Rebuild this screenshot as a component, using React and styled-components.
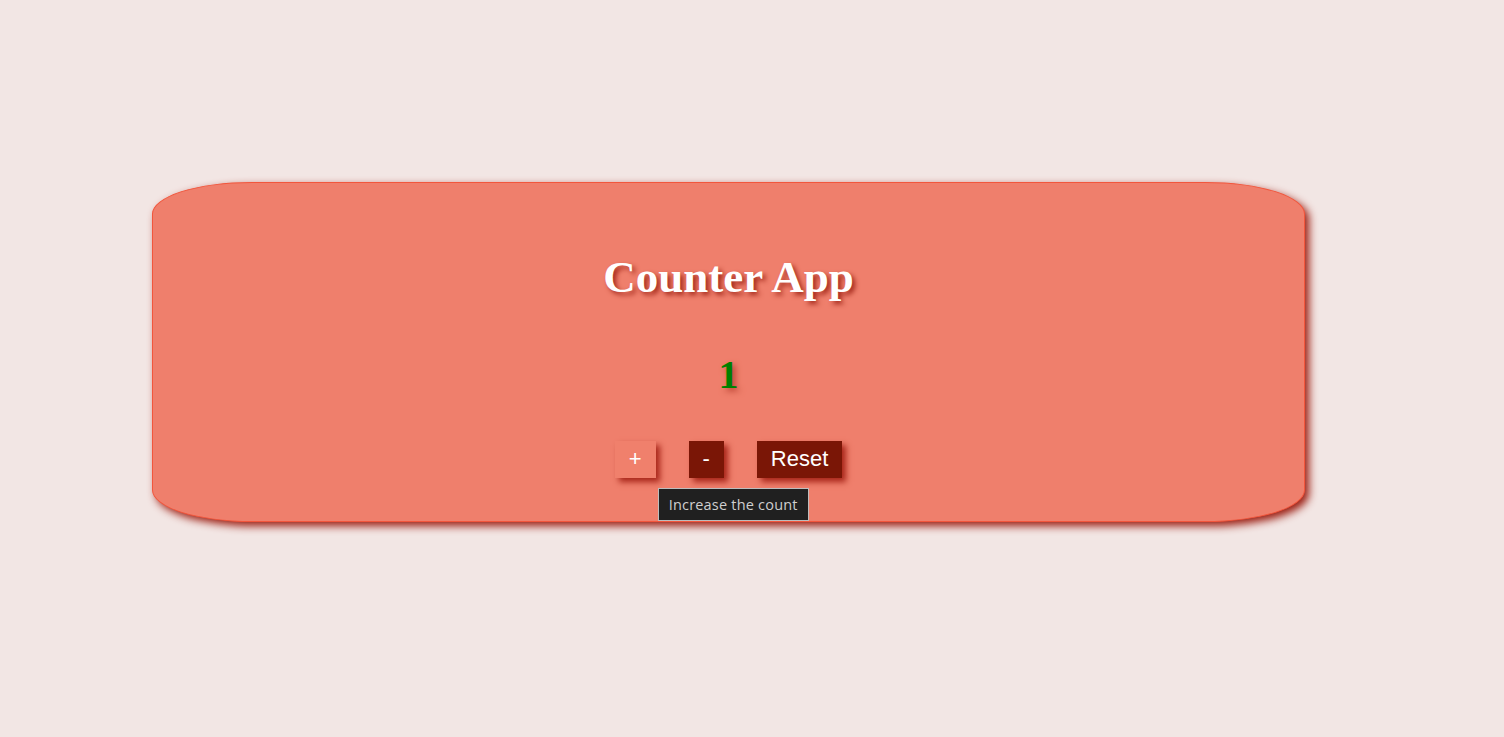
import React, { useState } from 'react'
import styled, { createGlobalStyle } from 'styled-components'

const GlobalStyle = createGlobalStyle`
  body {
    margin: 0;
    background: #f2e6e4;
    font-family: "Liberation Serif", "Times New Roman", serif;
  }
`

const StPage = styled.div`
  min-height: 737px;
  padding: 182px 0 0 152px;
  box-sizing: border-box;
`

const StCard = styled.div`
  width: 1153px;
  height: 340px;
  box-sizing: border-box;
  background: #ef7f6c;
  border: 1px solid #f2563c;
  border-radius: 100px / 32px;
  box-shadow: 4px 4px 8px #9b1c10;
  display: flex;
  flex-direction: column;
  align-items: center;
  padding-top: 69px;
`

const StTitle = styled.h1`
  margin: 0;
  font-size: 45px;
  font-weight: bold;
  color: #ffffff;
  text-shadow: 3px 3px 5px #a3281a;
  line-height: 1.15;
`

const StCount = styled.h2`
  margin: 48px 0 0;
  font-size: 40px;
  font-weight: bold;
  color: #008000;
  text-shadow: 3px 3px 6px #b8402e;
  line-height: 1.15;
`

const StBtnWrap = styled.div`
  position: relative;
  display: flex;
  gap: 33px;
  margin-top: 43px;
`

const StButton = styled.button`
  height: 37px;
  padding: 0 14px;
  border: none;
  background: ${(props) => (props.$light ? '#f0806c' : '#7a1606')};
  color: #ffffff;
  font-family: "Liberation Sans", Arial, sans-serif;
  font-size: 22px;
  box-shadow: 4px 4px 6px #a8261a;
  cursor: pointer;
`

const StTooltip = styled.div`
  position: absolute;
  left: 43px;
  top: 47px;
  padding: 0 10px;
  height: 33px;
  line-height: 31px;
  box-sizing: border-box;
  background: #202020;
  border: 1px solid #bdbdbd;
  color: #cfcfcf;
  font-family: "Open Sans", "Noto Sans", sans-serif;
  font-size: 14.5px;
  letter-spacing: 0.2px;
  white-space: nowrap;
`

const App = () => {
  const [count, setCount] = useState(1)

  return (
    <>
      <GlobalStyle />
      <StPage>
        <StCard>
          <StTitle>Counter App</StTitle>
          <StCount>{count}</StCount>
          <StBtnWrap>
            <StButton $light onClick={() => setCount(count + 1)}>+</StButton>
            <StButton onClick={() => setCount(count - 1)}>-</StButton>
            <StButton onClick={() => setCount(0)}>Reset</StButton>
            <StTooltip>Increase the count</StTooltip>
          </StBtnWrap>
        </StCard>
      </StPage>
    </>
  )
}

export default App
